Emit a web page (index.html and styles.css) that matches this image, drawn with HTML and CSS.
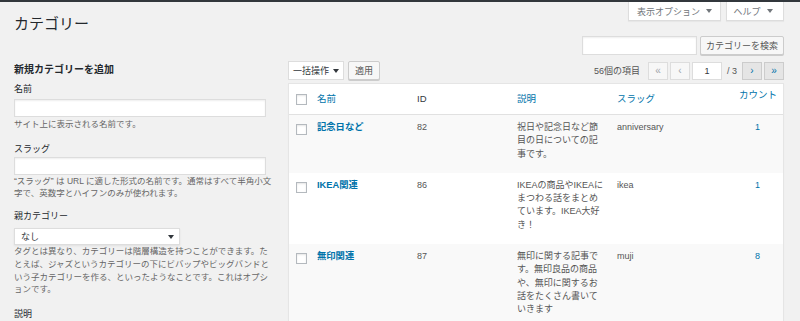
FILE: index.html
```html
<!DOCTYPE html>
<html lang="ja">
<head>
<meta charset="utf-8">
<title>カテゴリー</title>
<link rel="stylesheet" href="styles.css">
</head>
<body>
<div class="adminbar"></div>
<div class="wrap">
  <div class="page-head">
    <h1 class="page-title">カテゴリー</h1>
    <div class="screen-meta">
      <span class="meta-tab meta-options">表示オプション<span class="caret"></span></span>
      <span class="meta-tab meta-help">ヘルプ<span class="caret"></span></span>
    </div>
  </div>
  <div class="search-box">
    <span class="search-input"></span>
    <span class="btn btn-search">カテゴリーを検索</span>
  </div>
  <div class="columns">
    <div class="col-left">
      <h2 class="form-title">新規カテゴリーを追加</h2>
      <div class="field field-first">
        <div class="field-label">名前</div>
        <div class="text-input input-name"></div>
        <p class="field-desc desc-name">サイト上に表示される名前です。</p>
      </div>
      <div class="field">
        <div class="field-label">スラッグ</div>
        <div class="text-input input-slug"></div>
        <p class="field-desc">“スラッグ” は URL に適した形式の名前です。通常はすべて半角小文<br>字で、英数字とハイフンのみが使われます。</p>
      </div>
      <div class="field field-parent">
        <div class="field-label">親カテゴリー</div>
        <div class="select-box"><span>なし</span><span class="caret caret-dark"></span></div>
        <p class="field-desc">タグとは異なり、カテゴリーは階層構造を持つことができます。た<br>とえば、ジャズというカテゴリーの下にビバップやビッグバンドと<br>いう子カテゴリーを作る、といったようなことです。これはオプシ<br>ョンです。</p>
      </div>
      <div class="field">
        <div class="field-label">説明</div>
      </div>
    </div>
    <div class="col-right">
      <div class="tablenav">
        <div class="bulk">
          <div class="bulk-select"><span>一括操作</span><span class="caret caret-dark"></span></div>
          <span class="btn btn-apply">適用</span>
        </div>
        <div class="pages">
          <span class="item-count">56個の項目</span>
          <span class="page-btn disabled">«</span>
          <span class="page-btn disabled">‹</span>
          <span class="page-input">1</span>
          <span class="page-total">/ 3</span>
          <span class="page-btn active">›</span>
          <span class="page-btn active">»</span>
        </div>
      </div>
      <table class="list-table">
        <colgroup>
          <col class="c-cb"><col class="c-col"><col class="c-col"><col class="c-col"><col class="c-col"><col>
        </colgroup>
        <thead>
          <tr>
            <th class="cell-cb"><span class="checkbox"></span></th>
            <th><span class="link">名前</span></th>
            <th class="plain">ID</th>
            <th><span class="link">説明</span></th>
            <th><span class="link">スラッグ</span></th>
            <th class="count-head"><span class="link">カウント</span></th>
          </tr>
        </thead>
        <tbody>
          <tr class="alt">
            <td class="cell-cb"><span class="checkbox"></span></td>
            <td><span class="row-title">記念日など</span></td>
            <td>82</td>
            <td class="desc">祝日や記念日など節<br>目の日についての記<br>事です。</td>
            <td>anniversary</td>
            <td class="count"><span class="link">1</span></td>
          </tr>
          <tr>
            <td class="cell-cb"><span class="checkbox"></span></td>
            <td><span class="row-title">IKEA関連</span></td>
            <td>86</td>
            <td class="desc">IKEAの商品やIKEAに<br>まつわる話をまとめ<br>ています。IKEA大好<br>き！</td>
            <td>ikea</td>
            <td class="count"><span class="link">1</span></td>
          </tr>
          <tr class="alt">
            <td class="cell-cb"><span class="checkbox"></span></td>
            <td><span class="row-title">無印関連</span></td>
            <td>87</td>
            <td class="desc">無印に関する記事で<br>す。無印良品の商品<br>や、無印に関するお<br>話をたくさん書いて<br>いきます</td>
            <td>muji</td>
            <td class="count"><span class="link">8</span></td>
          </tr>
        </tbody>
      </table>
    </div>
  </div>
</div>
</body>
</html>
```

FILE: styles.css
```css
* { box-sizing: border-box; }

html, body { height: 100%; }

body {
  margin: 0;
  background: #f1f1f1;
  font-family: "Liberation Sans", "Noto Sans CJK JP", sans-serif;
  font-size: 9px;
  color: #444;
  overflow: hidden;
}

.adminbar { height: 2px; background: #32373c; }

.wrap { padding: 0 16px 0 14px; }

/* header */
.page-head {
  display: flex;
  justify-content: space-between;
  align-items: flex-start;
}
.page-title {
  margin: 12px 0 0;
  font-size: 15px;
  line-height: 20px;
  font-weight: 400;
  color: #23282d;
}
.screen-meta { display: flex; gap: 5px; }
.meta-tab {
  display: flex;
  align-items: center;
  justify-content: center;
  gap: 6px;
  height: 19px;
  background: #fff;
  border: 1px solid #ddd;
  border-top: none;
  box-shadow: 0 1px 1px rgba(0,0,0,.04);
  color: #72777c;
  font-size: 9px;
}
.meta-options { width: 93px; }
.meta-help { width: 58px; padding-right: 4px; }

.caret {
  display: inline-block;
  width: 0; height: 0;
  border-left: 3px solid transparent;
  border-right: 3px solid transparent;
  border-top: 4px solid #72777c;
}
.caret-dark { border-top-color: #32373c; }

/* search */
.search-box {
  margin-top: 2px;
  display: flex;
  justify-content: flex-end;
  gap: 3px;
  height: 19px;
}
.search-input {
  width: 115px;
  background: #fff;
  border: 1px solid #ddd;
  box-shadow: inset 0 1px 2px rgba(0,0,0,.07);
}
.btn {
  display: inline-flex;
  align-items: center;
  justify-content: center;
  background: #f7f7f7;
  border: 1px solid #ccc;
  border-radius: 2px;
  box-shadow: 0 1px 0 #ccc;
  color: #555;
  font-size: 9px;
  white-space: nowrap;
}
.btn-search { width: 84px; }

/* columns */
.columns { display: flex; gap: 9px; }
.col-left { width: 265px; flex: none; }
.col-right { flex: 1; }

/* form */
.form-title {
  margin: 8px 0 0;
  font-size: 10px;
  line-height: 14px;
  font-weight: 700;
  color: #23282d;
}
.field { margin-top: 12px; }
.field-first { margin-top: 5.5px; }
.field-parent { margin-top: 10px; }
.field-label {
  font-size: 9px;
  line-height: 13px;
  color: #23282d;
}
.text-input {
  width: 252px;
  height: 18px;
  margin-top: 1px;
  background: #fff;
  border: 1px solid #ddd;
  box-shadow: inset 0 1px 2px rgba(0,0,0,.07);
}
.input-name { margin-top: 3.5px; }
.field-desc {
  margin: 0;
  font-size: 8.5px;
  line-height: 12.7px;
  color: #666;
  white-space: nowrap;
}
.desc-name { margin-top: 1px; }
.select-box {
  margin-top: 5px;
  width: 166px;
  height: 17px;
  display: flex;
  align-items: center;
  justify-content: space-between;
  padding: 0 5px 0 6px;
  background: #fff;
  border: 1px solid #ddd;
  box-shadow: 0 1px 2px rgba(0,0,0,.07);
  color: #32373c;
  font-size: 9px;
}

/* tablenav */
.tablenav {
  margin-top: 6px;
  height: 19px;
  display: flex;
  justify-content: space-between;
  align-items: center;
}
.bulk { display: flex; gap: 4px; height: 19px; }
.bulk-select {
  width: 56px;
  display: flex;
  align-items: center;
  justify-content: space-between;
  padding: 0 4px 0 4px;
  background: #fff;
  border: 1px solid #ddd;
  color: #32373c;
  font-size: 9px;
}
.btn-apply { width: 32px; }
.pages { display: flex; align-items: center; gap: 2px; height: 18px; }
.item-count { color: #555; margin-right: 6px; }
.page-btn {
  width: 20px;
  height: 18px;
  display: flex;
  align-items: center;
  justify-content: center;
  font-size: 10px;
  border: 1px solid #ddd;
}
.page-btn.disabled { background: #f7f7f7; color: #a0a5aa; }
.page-btn.active { background: #e5e5e5; border-color: #ccc; color: #0073aa; }
.page-input {
  width: 30px;
  height: 18px;
  display: flex;
  align-items: center;
  justify-content: center;
  background: #fff;
  border: 1px solid #ddd;
  color: #32373c;
  font-size: 9px;
}
.page-total { color: #555; margin: 0 3px 0 3px; }

/* table */
.list-table {
  margin-top: 3px;
  width: 100%;
  table-layout: fixed;
  border-spacing: 0;
  background: #fff;
  border: 1px solid #e5e5e5;
  box-shadow: 0 1px 1px rgba(0,0,0,.04);
}
.c-cb { width: 22px; }
.c-col { width: 100px; }

.list-table th {
  height: 31px;
  padding: 0 6px;
  text-align: left;
  font-weight: 400;
  font-size: 9.5px;
  line-height: 13.3px;
  vertical-align: middle;
  border-bottom: 1px solid #e1e1e1;
  color: #32373c;
}
.list-table th.count-head {
  vertical-align: top;
  padding-top: 4px;
  text-align: right;
  padding-right: 6px;
}
.list-table td {
  padding: 6px 6px 12px;
  vertical-align: top;
  font-size: 9px;
  line-height: 13.3px;
  color: #555;
  white-space: nowrap;
}
.list-table tr.alt td { background: #f9f9f9; }
.list-table .cell-cb { padding-left: 7px; padding-right: 0; }
.list-table td.cell-cb { padding-top: 9px; }
.list-table td.count { text-align: right; padding-right: 23px; }

.link { color: #0073aa; }
.row-title { color: #0073aa; font-weight: 700; font-size: 9.3px; }

.checkbox {
  display: block;
  width: 11px;
  height: 11px;
  background: #fff;
  border: 1px solid #b4b9be;
  box-shadow: inset 0 1px 2px rgba(0,0,0,.1);
}
```
